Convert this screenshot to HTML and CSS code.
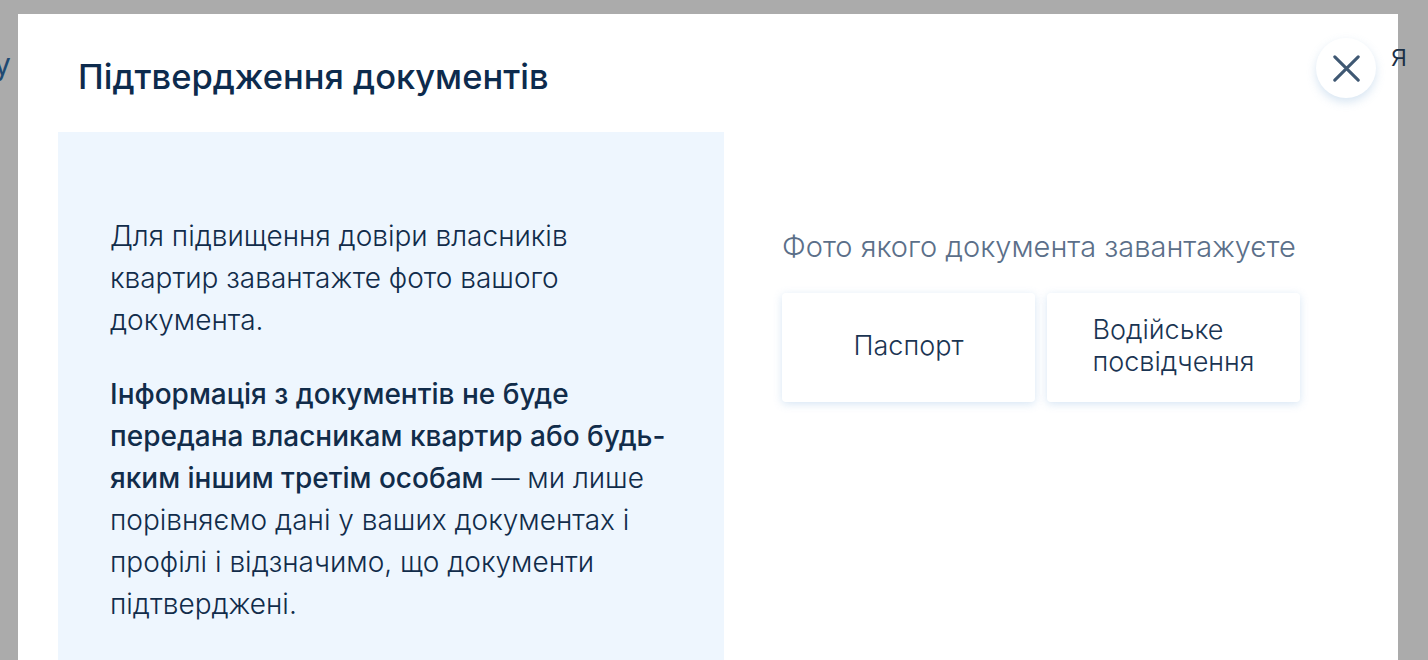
FILE: index.html
```html
<!DOCTYPE html>
<html lang="uk">
<head>
  <meta charset="UTF-8">
  <title>Підтвердження документів</title>
  <link rel="stylesheet" href="styles.css">
</head>
<body>

  <span class="behind behind-left">у</span>
  <span class="behind behind-right">я</span>

  <div class="modal">
    <button class="close-btn" aria-label="Закрити">
      <svg width="30" height="30" viewBox="0 0 30 30">
        <path d="M2 2 L28 28 M28 2 L2 28" stroke="#3f5873" stroke-width="3.4" stroke-linecap="round" fill="none"/>
      </svg>
    </button>

    <h2 class="modal-title">Підтвердження документів</h2>

    <div class="modal-body">
      <div class="info-panel">
        <p>Для підвищення довіри власників квартир завантажте фото вашого документа.</p>
        <p><b>Інформація з документів не буде передана власникам квартир або будь-яким іншим третім особам</b> — ми лише порівняємо дані у ваших документах і профілі і відзначимо, що документи підтверджені.</p>
      </div>

      <div class="doc-choice">
        <div class="doc-label">Фото якого документа завантажуєте</div>
        <div class="doc-options">
          <button class="doc-card"><span>Паспорт</span></button>
          <button class="doc-card"><span>Водійське<br>посвідчення</span></button>
        </div>
      </div>
    </div>
  </div>

</body>
</html>
```

FILE: styles.css
```css
body {
  margin: 0;
  padding: 14px 30px 0 18px;
  height: 100vh;
  box-sizing: border-box;
  overflow: hidden;
  background: #ababab;
  font-family: Inter, "Noto Sans", sans-serif;
  color: #0f2b4a;
  position: relative;
}

.behind {
  position: absolute;
  font-size: 30px;
  color: #1f4a72;
}

.behind-left {
  left: -6px;
  top: 46px;
}

.behind-right {
  left: 1391px;
  top: 37px;
  font-weight: 300;
  color: #1b2f45;
  z-index: 2;
}

.modal {
  position: relative;
  background: #fff;
  height: 100%;
}

.modal-title {
  margin: 0;
  padding: 45px 60px 0 60px;
  height: 73px;
  font-size: 34.5px;
  line-height: 36px;
  font-weight: 500;
  color: #0d2b4d;
}

.close-btn {
  position: absolute;
  top: 24px;
  right: 22px;
  width: 60px;
  height: 60px;
  border: none;
  border-radius: 50%;
  background: #fff;
  box-shadow: 0 4px 10px rgba(110, 160, 210, 0.28);
  display: flex;
  align-items: center;
  justify-content: center;
  padding: 0;
  cursor: pointer;
}

.close-btn svg {
  width: 27px;
  height: 27px;
}

.modal-body {
  display: flex;
  padding-left: 40px;
  height: 528px;
}

.info-panel {
  width: 666px;
  box-sizing: border-box;
  background: #eef6fe;
  padding: 83px 50px 0 52px;
  font-size: 28px;
  line-height: 42px;
  font-weight: 350;
  color: #112c4a;
}

.info-panel p {
  margin: 0 0 32px;
}

.info-panel b {
  font-weight: 500;
}

.doc-choice {
  padding: 99px 0 0 58px;
  width: 520px;
}

.doc-label {
  font-size: 29px;
  line-height: 32px;
  font-weight: 300;
  color: #5b6f89;
  white-space: nowrap;
}

.doc-options {
  display: flex;
  gap: 12px;
  margin-top: 30px;
}

.doc-card {
  width: 253px;
  height: 109px;
  border: none;
  border-radius: 4px;
  background: #fff;
  box-shadow: 0 2px 8px rgba(120, 170, 220, 0.3);
  font-family: inherit;
  font-size: 27px;
  line-height: 32px;
  font-weight: 300;
  color: #1a3452;
  display: flex;
  align-items: center;
  justify-content: center;
  text-align: left;
  padding: 0 0 4px;
  cursor: pointer;
}
```
